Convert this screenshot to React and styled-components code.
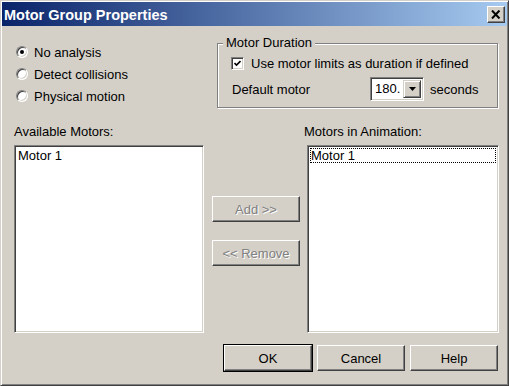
import React from "react";
import styled, { createGlobalStyle, css } from "styled-components";

const GlobalStyle = createGlobalStyle`
  html, body {
    margin: 0;
    padding: 0;
    background: #d4d0c8;
  }
  * {
    box-sizing: border-box;
  }
`;

const Window = styled.div`
  width: 509px;
  height: 386px;
  display: flex;
  flex-direction: column;
  padding: 1px;
  background: #d4d0c8;
  border: 1px solid;
  border-color: #d4d0c8 #404040 #404040 #d4d0c8;
  box-shadow: inset 1px 1px 0 #fff, inset -1px -1px 0 #808080;
  font-family: "Liberation Sans", Arial, sans-serif;
  font-size: 13px;
  color: #000;
`;

const TitleBar = styled.div`
  height: 24px;
  display: flex;
  align-items: center;
  justify-content: space-between;
  padding: 1px 2px 0 2px;
  background: linear-gradient(to right, #0a246a, #a6caf0);
`;

const Title = styled.div`
  color: #fff;
  font-weight: bold;
  font-size: 14.5px;
`;

const CloseButton = styled.div`
  width: 18px;
  height: 17px;
  margin-top: -1px;
  display: flex;
  align-items: center;
  justify-content: center;
  background: #d4d0c8;
  border: 1px solid;
  border-color: #fff #404040 #404040 #fff;
  box-shadow: inset -1px -1px 0 #808080;
`;

const Body = styled.div`
  flex: 1;
  display: flex;
  flex-direction: column;
  padding: 9px 9px 0 12px;
`;

const TopRow = styled.div`
  display: flex;
  align-items: flex-start;
`;

const RadioGroup = styled.div`
  display: flex;
  flex-direction: column;
  margin: 6px 0 0 2px;
`;

const RadioRow = styled.label`
  height: 22px;
  display: flex;
  align-items: center;
  gap: 6px;
`;

const RadioCircle = styled.span`
  width: 12px;
  height: 12px;
  border-radius: 50%;
  background: #fff;
  border: 1px solid;
  border-color: #808080 #fff #fff #808080;
  box-shadow: inset 1px 1px 0 #404040, inset -1px -1px 0 #d4d0c8;
  display: flex;
  align-items: center;
  justify-content: center;
  &::after {
    content: "";
    width: 4px;
    height: 4px;
    border-radius: 50%;
    background: ${(p) => (p.$checked ? "#000" : "transparent")};
  }
`;

const GroupBox = styled.fieldset`
  width: 281px;
  margin: 0 0 0 auto;
  padding: 4px 0 6px 13px;
  border: 1px solid #808080;
  box-shadow: 1px 1px 0 #fff, inset 1px 1px 0 #fff;
  display: flex;
  flex-direction: column;
  gap: 6px;
`;

const Legend = styled.legend`
  margin-left: -8px;
  padding: 0 3px;
  line-height: 16px;
  background: #d4d0c8;
`;

const FieldRow = styled.div`
  height: ${(p) => p.$height || 16}px;
  display: flex;
  align-items: center;
`;

const CheckBox = styled.span`
  width: 13px;
  height: 13px;
  margin-right: 7px;
  background: #fff;
  border: 1px solid;
  border-color: #808080 #fff #fff #808080;
  box-shadow: inset 1px 1px 0 #404040, inset -1px -1px 0 #d4d0c8;
  display: flex;
  align-items: center;
  justify-content: center;
`;

const MotorLabel = styled.span`
  width: 139px;
  padding-left: 1px;
`;

const Combo = styled.div`
  width: 54px;
  height: 24px;
  display: flex;
  padding: 2px;
  background: #fff;
  border: 1px solid;
  border-color: #808080 #fff #fff #808080;
  box-shadow: inset 1px 1px 0 #404040, inset -1px -1px 0 #d4d0c8;
  margin-right: 6px;
`;

const ComboValue = styled.span`
  flex: 1;
  padding-left: 2px;
  line-height: 18px;
`;

const ComboButton = styled.span`
  width: 18px;
  height: 18px;
  display: flex;
  align-items: center;
  justify-content: center;
  background: #d4d0c8;
  border: 1px solid;
  border-color: #d4d0c8 #404040 #404040 #d4d0c8;
  box-shadow: inset 1px 1px 0 #fff, inset -1px -1px 0 #808080;
`;

const ListsGrid = styled.div`
  display: grid;
  grid-template-columns: 190px 88px 191px;
  column-gap: 8px;
  margin-top: 16px;
  & > :nth-child(3) {
    margin-left: -1px;
  }
`;

const Column = styled.div`
  display: flex;
  flex-direction: column;
`;

const FieldLabel = styled.div`
  line-height: 16px;
  margin-bottom: 5px;
  margin-left: ${(p) => p.$shift || 0}px;
`;

const ListBox = styled.div`
  height: 188px;
  padding: 2px;
  background: #fff;
  border: 1px solid;
  border-color: #808080 #fff #fff #808080;
  box-shadow: inset 1px 1px 0 #404040, inset -1px -1px 0 #d4d0c8;
`;

const ListItem = styled.div`
  height: 15px;
  line-height: 13px;
  border: 1px ${(p) => (p.$focused ? "dotted #000" : "solid transparent")};
`;

const MiddleColumn = styled.div`
  display: flex;
  flex-direction: column;
  gap: 18px;
  padding-top: 72px;
`;

const Button = styled.div`
  width: 88px;
  height: 26px;
  display: flex;
  align-items: center;
  justify-content: center;
  background: #d4d0c8;
  border: 1px solid;
  border-color: #fff #404040 #404040 #fff;
  box-shadow: inset -1px -1px 0 #808080;
  ${(p) =>
    p.$disabled &&
    css`
      color: #808080;
      text-shadow: 1px 1px 0 #fff;
    `}
  ${(p) =>
    p.$default &&
    css`
      box-shadow: inset -1px -1px 0 #808080, 0 0 0 1px #000;
    `}
`;

const Footer = styled.div`
  display: flex;
  justify-content: flex-end;
  gap: 5px;
  margin-top: 12px;
`;

const App = () => {
  return (
    <>
      <GlobalStyle />
      <Window>
        <TitleBar>
          <Title>Motor Group Properties</Title>
          <CloseButton>
            <svg width="10" height="9" viewBox="0 0 10 9">
              <path d="M1 0.5 L8.5 8.5 M8.5 0.5 L1 8.5" stroke="#000" strokeWidth="2" />
            </svg>
          </CloseButton>
        </TitleBar>
        <Body>
          <TopRow>
            <RadioGroup>
              <RadioRow>
                <RadioCircle $checked />
                No analysis
              </RadioRow>
              <RadioRow>
                <RadioCircle />
                Detect collisions
              </RadioRow>
              <RadioRow>
                <RadioCircle />
                Physical motion
              </RadioRow>
            </RadioGroup>
            <GroupBox>
              <Legend>Motor Duration</Legend>
              <FieldRow>
                <CheckBox>
                  <svg width="7" height="7" viewBox="0 0 7 7">
                    <path d="M0.5 3 L2.5 5 L6.5 1" stroke="#000" strokeWidth="1.6" fill="none" />
                  </svg>
                </CheckBox>
                Use motor limits as duration if defined
              </FieldRow>
              <FieldRow $height={24}>
                <MotorLabel>Default motor</MotorLabel>
                <Combo>
                  <ComboValue>180.</ComboValue>
                  <ComboButton>
                    <svg width="7" height="4" viewBox="0 0 7 4">
                      <path d="M0 0 H7 L3.5 4 Z" fill="#000" />
                    </svg>
                  </ComboButton>
                </Combo>
                seconds
              </FieldRow>
            </GroupBox>
          </TopRow>
          <ListsGrid>
            <Column>
              <FieldLabel>Available Motors:</FieldLabel>
              <ListBox>
                <ListItem>Motor 1</ListItem>
              </ListBox>
            </Column>
            <MiddleColumn>
              <Button $disabled>Add &gt;&gt;</Button>
              <Button $disabled>&lt;&lt; Remove</Button>
            </MiddleColumn>
            <Column>
              <FieldLabel $shift={-3}>Motors in Animation:</FieldLabel>
              <ListBox>
                <ListItem $focused>Motor 1</ListItem>
              </ListBox>
            </Column>
          </ListsGrid>
          <Footer>
            <Button $default>OK</Button>
            <Button>Cancel</Button>
            <Button>Help</Button>
          </Footer>
        </Body>
      </Window>
    </>
  );
};

export default App;
